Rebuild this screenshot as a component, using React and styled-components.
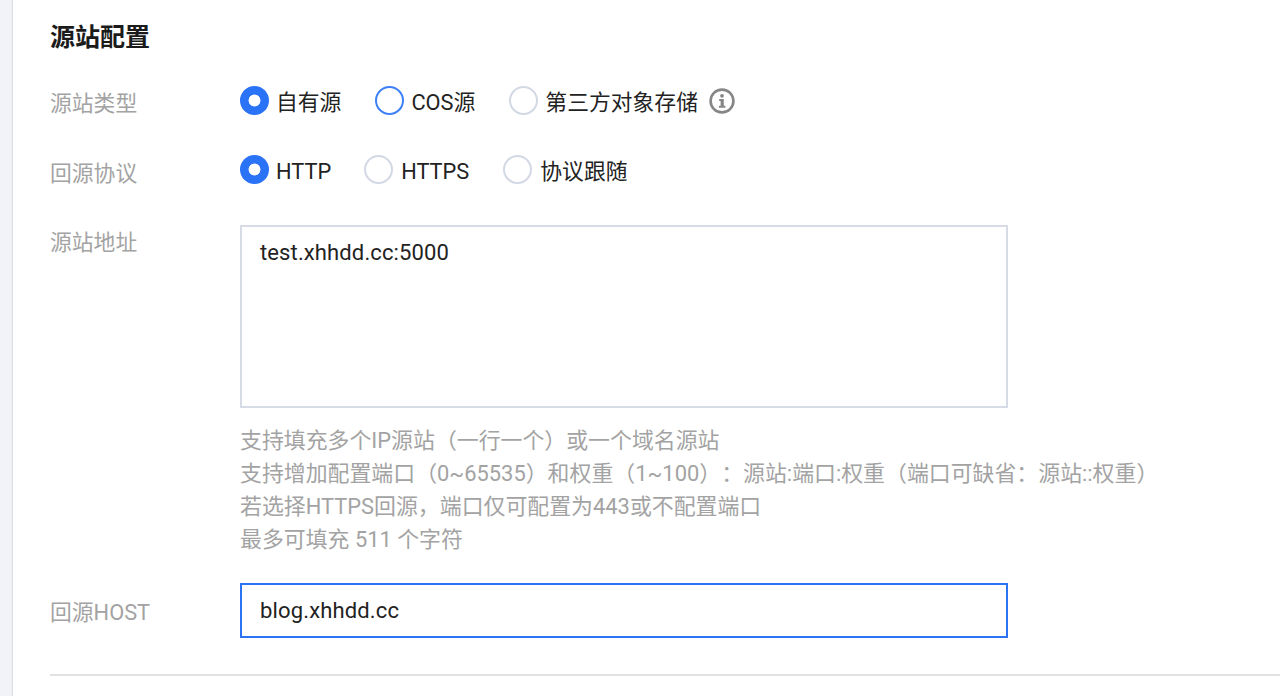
import React from "react";
import styled, { createGlobalStyle } from "styled-components";

const Global = createGlobalStyle`
  html, body { margin: 0; padding: 0; height: 696px; overflow: hidden; background: #f2f3f8; }
  body { font-family: Roboto, "Noto Sans CJK SC", sans-serif; text-spacing-trim: space-all; }
`;

const Page = styled.div`
  height: 696px;
  box-sizing: border-box;
  margin-left: 13px;
  background: #fff;
  box-shadow: -1px 0 1px #dcdde3;
  padding: 23px 0 0 37px;
  overflow: hidden;
`;

const Title = styled.h2`
  margin: 0 0 33px;
  font-size: 25px;
  line-height: 30px;
  font-weight: 700;
  color: #1b1b1b;
`;

const Row = styled.div`
  display: flex;
  align-items: ${(p) => (p.$top ? "flex-start" : "center")};
  margin-bottom: ${(p) => p.$mb || 0}px;
`;

const Label = styled.div`
  width: 190px;
  flex: none;
  font-size: 21.8px;
  line-height: 30px;
  color: #a3a3a3;
  padding-top: ${(p) => p.$pt || 0}px;
`;

const Group = styled.div`
  display: flex;
  align-items: center;
  align-self: flex-start;
  height: 29px;
`;

const Radio = styled.span`
  display: block;
  flex: none;
  box-sizing: border-box;
  width: 29px;
  height: 29px;
  border-radius: 50%;
  background: ${(p) =>
    p.$state === "on"
      ? "radial-gradient(circle, #fff 5.6px, #2a72f6 6.3px)"
      : "#fff"};
  border: ${(p) =>
    p.$state === "on"
      ? "0"
      : p.$state === "focus"
      ? "2px solid #3d80f7"
      : "2px solid #d2d8e4"};
`;

const Option = styled.label`
  display: flex;
  align-items: center;
  gap: ${(p) => p.$gap || 8}px;
  margin-right: ${(p) => p.$mr || 34}px;
`;

const OptionText = styled.span`
  padding-top: 4px;
  font-size: 21.8px;
  line-height: 30px;
  color: #222;
`;

const Info = styled.svg`
  width: 26px;
  height: 26px;
  margin-left: -23px;
  flex: none;
`;

const AddressArea = styled.textarea`
  display: block;
  box-sizing: border-box;
  width: 768px;
  height: 183px;
  margin: 0;
  padding: 11px 18px;
  border: 2px solid #d6dbe6;
  border-radius: 0;
  outline: none;
  resize: none;
  font: 22px/30px Roboto, "Noto Sans CJK SC", sans-serif;
  letter-spacing: 0.12px;
  color: #222;
`;

const Help = styled.div`
  margin-top: 16px;
  font-size: 21.9px;
  line-height: 33px;
  color: #a3a3a3;
  white-space: nowrap;
`;

const HostInput = styled.input`
  display: block;
  box-sizing: border-box;
  width: 768px;
  height: 55px;
  margin: 0;
  padding: 0 18px;
  border: 2px solid #2d74f4;
  border-radius: 0;
  outline: none;
  font: 22px Roboto, "Noto Sans CJK SC", sans-serif;
  letter-spacing: 0.15px;
  color: #222;
`;

const Divider = styled.hr`
  margin: 36px 0 0;
  border: 0;
  border-top: 2px solid #e2e2e2;
`;

export default function App() {
  return (
    <>
      <Global />
      <Page>
        <Title>源站配置</Title>
        <Row $mb={36}>
          <Label $pt={3}>源站类型</Label>
          <Group>
            <Option $gap={7} $mr={34}><Radio $state="on" /><OptionText>自有源</OptionText></Option>
            <Option $gap={7} $mr={34}><Radio $state="focus" /><OptionText>COS源</OptionText></Option>
            <Option $gap={7} $mr={34}><Radio /><OptionText>第三方对象存储</OptionText></Option>
            <Info viewBox="0 0 26 26" fill="none" aria-hidden="true">
              <circle cx="13" cy="13" r="11.4" stroke="#868686" strokeWidth="2.6" />
              <circle cx="13" cy="7.8" r="1.9" fill="#868686" />
              <path d="M10.2 11h4.6v6.8h1.6v2H9.9v-2h1.7v-4.8h-1.4z" fill="#868686" />
            </Info>
          </Group>
        </Row>
        <Row $mb={36}>
          <Label $pt={4}>回源协议</Label>
          <Group>
            <Option $gap={7} $mr={33}><Radio $state="on" /><OptionText>HTTP</OptionText></Option>
            <Option $gap={8} $mr={34}><Radio /><OptionText>HTTPS</OptionText></Option>
            <Option $gap={8}><Radio /><OptionText>协议跟随</OptionText></Option>
          </Group>
        </Row>
        <Row $top $mb={27}>
          <Label $pt={3}>源站地址</Label>
          <div>
            <AddressArea readOnly defaultValue="test.xhhdd.cc:5000" />
            <Help>
              支持填充多个IP源站（一行一个）或一个域名源站<br />
              支持增加配置端口（0~65535）和权重（1~100）：源站:端口:权重（端口可缺省：源站::权重）<br />
              若选择HTTPS回源，端口仅可配置为443或不配置端口<br />
              最多可填充 511 个字符
            </Help>
          </div>
        </Row>
        <Row>
          <Label $pt={4}>回源HOST</Label>
          <HostInput readOnly defaultValue="blog.xhhdd.cc" />
        </Row>
        <Divider />
      </Page>
    </>
  );
}
